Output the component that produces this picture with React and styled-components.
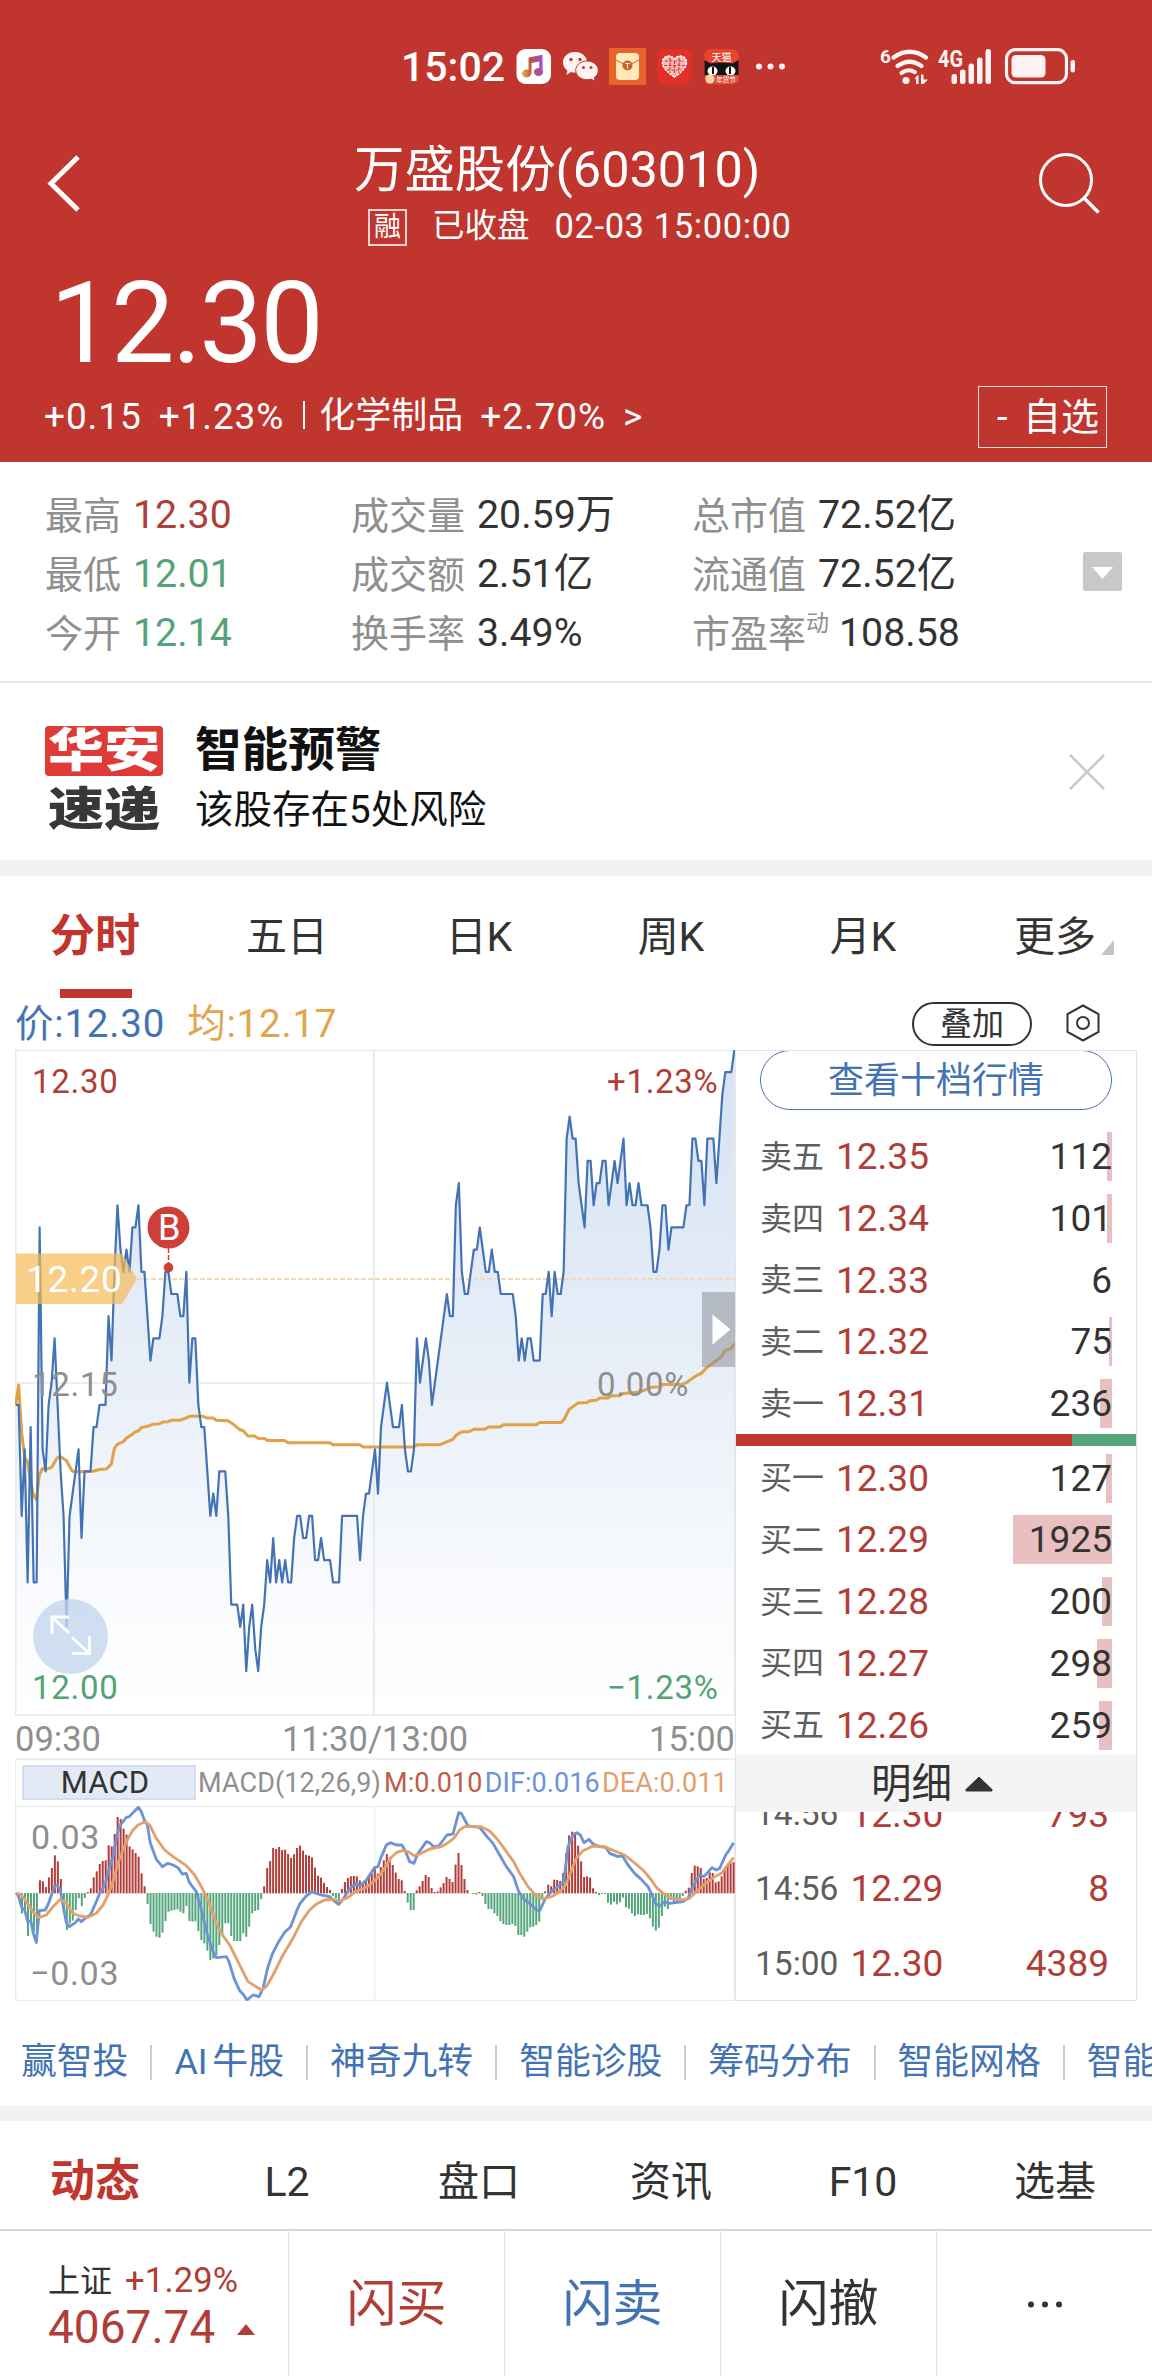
import React, { Component } from "react"
import styled, { createGlobalStyle, css } from "styled-components"

const RED = "#c0362f"
const UP = "#b03d36"
const DOWN = "#54a376"
const BLUE = "#4473b4"
const GRAY = "#8f8f8f"
const DARK = "#333"

// one entry per minute, in 0.01 steps below 12.30
const PRICE = [
	16, 16, 21, 18, 24, 17, 24, 24, 8, 18, 19, 16, 15, 13, 16, 19, 21, 26, 21, 20, 19, 18, 22, 19, 19, 19, 17, 17, 16, 16,
	16, 12, 14, 10, 7, 9, 10, 9, 10, 8, 8, 7, 10, 10, 12, 14, 13, 13, 13, 12, 10, 10, 11, 11, 11, 12, 12, 10, 15, 13,
	13, 16, 17, 17, 19, 21, 20, 21, 19, 19, 19, 21, 25, 25, 25, 26, 25, 28, 26, 25, 27, 28, 26, 25, 23, 24, 22, 24, 23, 24,
	23, 24, 24, 22, 21, 21, 22, 22, 21, 21, 23, 23, 22, 23, 23, 23, 24, 24, 24, 21, 21, 21, 21, 21, 21, 23, 21, 20, 20, 19,
	18, 20, 17, 16, 15, 16, 17, 17, 17, 16, 18, 19, 19, 18, 13, 15, 14, 13, 14, 16, 15, 14, 13, 12, 11, 12, 12, 7, 6, 10,
	11, 11, 10, 9, 9, 8, 9, 10, 10, 9, 10, 10, 11, 11, 11, 11, 11, 12, 14, 13, 14, 13, 13, 14, 14, 14, 11, 11, 10, 12,
	10, 11, 11, 10, 4, 3, 4, 4, 6, 7, 8, 5, 5, 7, 6, 6, 5, 5, 7, 6, 5, 6, 5, 4, 7, 6, 7, 7, 6, 7,
	7, 7, 8, 10, 10, 9, 7, 7, 9, 8, 8, 8, 8, 8, 7, 7, 4, 4, 5, 5, 7, 4, 4, 4, 6, 4, 2, 1, 1, 1, 0,
]

const AVERAGE =
	"48,817 57,773 66,880 75,935 84,945 93,990 101,1018 110,1030 119,975 128,960 137,962 155,958 173,936 182,933 200,942 218,966 240,967 280,966 299,962 320,961 335,950 344,915 353,906 371,900 380,892 398,883 407,878 416,876 425,868 445,865 460,861 478,860 490,856 505,855 514,852 540,852 555,848 570,843 610,843 622,847 640,847 650,852 685,853 703,862 720,873 730,875 745,887 765,887 775,892 795,893 803,897 855,897 865,902 990,902 1000,907 1080,907 1090,912 1240,912 1252,907 1320,907 1335,902 1359,895 1370,885 1385,878 1410,877 1422,872 1455,872 1467,867 1500,867 1512,862 1610,862 1620,857 1685,857 1695,848 1708,828 1735,813 1762,812 1770,808 1790,807 1800,802 1825,802 1835,797 1860,797 1870,792 1910,790 1930,786 1955,778 1980,777 1990,772 2045,772 2060,768 2080,757 2095,750 2105,747 2120,735 2165,710 2177,695 2195,692 2204,680"

const BARS = [
	0, -20, -60, -50, -128, -80, -115, -128, 38, 35, 18, 47, 75, 113, 95, 42, -60, -110, -90, -82, -50, -15, -38, -14, 3, 14, 47, 65, 87, 96,
	98, 143, 140, 177, 228, 222, 193, 175, 140, 131, 120, 109, 59, 20, -32, -92, -115, -130, -133, -118, -83, -55, -52, -50, -48, -55, -60, -38, -83, -85,
	-84, -113, -140, -150, -172, -200, -195, -185, -155, -125, -90, -90, -128, -143, -143, -143, -120, -130, -100, -60, -53, -50, -17, 20, 75, 96, 135, 132, 138, 129,
	130, 117, 105, 116, 135, 142, 127, 114, 112, 107, 76, 52, 46, 30, 18, 9, -8, -15, -25, 12, 33, 45, 50, 51, 50, 38, 30, 36, 48, 58,
	75, 58, 78, 98, 117, 107, 84, 61, 42, 38, 6, -28, -50, -50, 8, 20, 36, 54, 48, 15, 3, 5, 17, 30, 48, 42, 33, 85, 120, 84,
	42, 9, 0, -2, -4, 3, -8, -32, -47, -47, -60, -68, -84, -92, -95, -95, -92, -98, -125, -125, -130, -115, -102, -100, -95, -85, -20, 5, 25, 20,
	40, 39, 36, 60, 120, 173, 184, 182, 142, 95, 48, 50, 46, 14, 3, -5, -2, -2, -28, -34, -26, -33, -27, -13, -42, -46, -60, -68, -63, -65,
	-65, -62, -75, -100, -112, -103, -68, -40, -47, -20, -30, -25, -20, -8, 7, 16, 60, 82, 80, 75, 42, 45, 62, 60, 32, 35, 50, 72, 82, 90, 93,
]

const DIF =
	"50,578 57,590 66,622 75,630 84,665 93,662 101,700 110,728 119,632 137,630 146,612 164,560 173,556 182,570 190,615 200,668 209,680 227,668 236,657 245,665 263,650 272,645 290,605 300,580 317,550 326,515 340,470 353,400 362,375 380,352 389,350 400,338 416,322 425,335 434,360 443,375 452,430 470,478 488,500 505,490 520,495 535,503 548,522 560,520 568,545 577,558 590,575 604,625 622,700 640,755 650,773 680,770 688,785 703,835 720,872 730,882 742,900 760,885 778,890 790,865 805,800 819,760 837,725 855,697 873,680 890,635 900,612 918,590 936,575 950,580 965,585 990,590 1000,600 1017,613 1030,598 1050,565 1070,550 1080,558 1100,540 1125,503 1135,500 1143,475 1160,435 1172,428 1190,435 1207,435 1218,455 1230,485 1243,490 1255,460 1280,425 1290,428 1302,440 1317,438 1342,405 1360,402 1377,338 1385,340 1405,378 1440,382 1462,410 1480,430 1500,465 1520,500 1542,530 1557,575 1575,600 1590,610 1610,630 1620,632 1635,600 1650,580 1665,565 1692,548 1705,440 1720,405 1732,398 1742,405 1753,428 1768,418 1780,432 1800,440 1818,442 1830,460 1855,470 1868,467 1885,495 1905,520 1925,538 1945,560 1955,580 1968,612 1980,618 1995,605 2010,610 2050,605 2065,595 2075,570 2090,540 2100,525 2113,530 2137,503 2150,510 2160,505 2178,465 2190,448 2202,428"

const DEA =
	"50,578 65,585 80,605 100,635 117,653 140,645 160,620 182,598 200,610 220,640 240,648 265,652 290,640 310,615 325,585 340,545 355,490 370,450 385,415 400,390 415,375 435,366 450,375 470,415 495,450 520,470 560,497 585,525 605,560 625,600 650,670 665,700 690,735 715,785 745,845 785,870 800,860 820,825 850,765 880,715 905,665 930,630 950,612 975,600 1000,598 1020,603 1045,592 1070,573 1090,567 1110,555 1135,532 1155,505 1175,472 1190,458 1207,452 1225,455 1243,467 1260,462 1290,447 1325,440 1345,428 1362,415 1380,390 1395,380 1445,380 1470,393 1495,420 1520,455 1542,485 1560,520 1585,560 1610,588 1630,597 1655,590 1680,575 1698,555 1710,525 1730,475 1750,452 1780,438 1815,440 1845,453 1875,465 1900,485 1930,510 1955,540 1970,562 1990,580 2015,593 2045,600 2070,595 2095,570 2125,545 2145,530 2165,520 2180,500 2202,473"

const STATS = [
	[
		["最高", "12.30", UP],
		["最低", "12.01", DOWN],
		["今开", "12.14", DOWN],
	],
	[
		["成交量", "20.59万"],
		["成交额", "2.51亿"],
		["换手率", "3.49%"],
	],
	[
		["总市值", "72.52亿"],
		["流通值", "72.52亿"],
		["市盈率", "108.58", DARK, "动"],
	],
]

const SELLS = [
	["卖五", "12.35", 112, 5],
	["卖四", "12.34", 101, 5],
	["卖三", "12.33", 6, 0],
	["卖二", "12.32", 75, 3],
	["卖一", "12.31", 236, 12],
]

const BUYS = [
	["买一", "12.30", 127, 6],
	["买二", "12.29", 1925, 99],
	["买三", "12.28", 200, 10],
	["买四", "12.27", 298, 15],
	["买五", "12.26", 259, 13],
]

const TRADES = [
	["14:56", "12.30", 793],
	["14:56", "12.29", 8],
	["15:00", "12.30", 4389],
]

const GlobalStyle = createGlobalStyle`
	body {
		margin: 0;
		background: #fff;
		font-family: Roboto, "Noto Sans CJK SC", sans-serif;
		color: ${DARK};
	}
	svg {
		display: block;
		flex: none;
	}
`

const Page = styled.div`
	width: 1152px;
	height: 2376px;
	overflow: hidden;
	line-height: 1;
	white-space: nowrap;
`

const Header = styled.header`
	height: 462px;
	background: ${RED};
	color: #fff;
`

const StatusBar = styled.div`
	display: flex;
	align-items: center;
	height: 134px;
	padding-left: 401px;
	box-sizing: border-box;
`

const Clock = styled.span`
	width: 115px;
	padding-top: 1px;
	font-size: 41px;
	font-weight: 500;
`

const Nav = styled.div`
	display: flex;
	height: 114px;
	padding-left: 47px;

	.back {
		margin-top: 20px;
	}
	.search {
		margin: 18px 0 0 auto;
		padding-right: 51px;
	}
`

const Heading = styled.div`
	width: 500px;
	padding-left: 273px;

	h1 {
		margin: 0;
		font-size: 50.4px;
		font-weight: 400;
		line-height: 71px;
	}
	p {
		display: flex;
		align-items: center;
		height: 42px;
		margin: 0;
		padding-left: 14px;
		font-size: 32.5px;
	}
	.time {
		margin-left: 25px;
		font-size: 34.5px;
		letter-spacing: 0.6px;
	}
`

const MarginTag = styled.span`
	width: 39px;
	margin: 3px 25px 0 0;
	border: 2px solid #f3d3d1;
	box-sizing: border-box;
	font-size: 27px;
	line-height: 33px;
	text-align: center;
`

const LastPrice = styled.div`
	height: 139px;
	padding-left: 50px;
	font-size: 113px;
	line-height: 151px;
	letter-spacing: -2.5px;
`

const ChangeRow = styled.div`
	display: flex;
	align-items: center;
	height: 60px;
	padding: 0 45px 0 44px;
	font-size: 36px;

	span {
		margin: 0 17px 2px 0;
	}
	i {
		width: 2px;
		height: 28px;
		margin: 0 14px 4px 2px;
		background: #fff;
	}
`

const Change = styled.span`
	font-size: 37px;
	letter-spacing: 0.9px;
`

const WatchButton = styled.div`
	width: 129px;
	margin-left: auto;
	padding-left: 18px;
	border: 1px solid #f6dddc;
	box-sizing: border-box;
	font-size: 38px;
	line-height: 60px;
	word-spacing: 6px;
`

const Stats = styled.section`
	display: flex;
	height: 221px;
	padding-top: 24px;
	box-sizing: border-box;
	border-bottom: 2px solid #e6e6e6;

	svg {
		margin: 66px 30px 0 auto;
	}
`

const StatColumn = styled.div`
	width: ${({ $width }) => $width}px;
	padding-left: ${({ $left }) => $left}px;
	box-sizing: border-box;
`

const Stat = styled.div`
	display: flex;
	align-items: center;
	height: 59px;
	font-size: 38px;
	color: ${GRAY};

	sup {
		align-self: flex-start;
		margin-right: -2px;
		font-size: 23px;
		line-height: 40px;
	}
	b {
		margin-left: 12px;
		font-size: 39.3px;
		font-weight: 400;
		color: ${({ $color }) => $color || DARK};
	}
`

const Alert = styled.section`
	display: flex;
	align-items: center;
	height: 177px;
	padding: 0 47px 0 45px;
	border-bottom: 16px solid #f1f1f1;

	svg {
		margin-left: auto;
	}
`

const AlertLogo = styled.div`
	width: 118px;
	height: 112px;
	margin: 23px 32px 3px 0;
	font-weight: 900;
	text-align: center;

	div {
		height: 50px;
		border-radius: 4px;
		line-height: 48px;
		background: #de3a37;
		color: #fff;
	}
	div + div {
		height: 62px;
		line-height: 66px;
		background: none;
		color: #383838;
	}
	span {
		display: inline-block;
		font-size: 46px;
		transform: scaleX(1.22);
	}
`

const AlertText = styled.div`
	padding-top: 17px;
	font-size: 38.5px;
	line-height: 59px;
	color: #111;

	strong {
		display: block;
		font-size: 46.6px;
		font-weight: 700;
	}
`

const Tabs = styled.nav`
	display: grid;
	grid-template-columns: repeat(6, 192px);
	height: ${({ $height }) => $height}px;
	line-height: ${({ $line }) => $line}px;
	text-align: center;
	font-size: 41px;
`

const Tab = styled.span`
	position: relative;
	text-indent: -2px;
	${({ $active }) =>
		$active &&
		css`
			font-size: 45px;
			font-weight: 700;
			color: ${RED};
		`}
	${({ $underline }) =>
		$underline &&
		css`
			&:after {
				content: "";
				position: absolute;
				left: 60px;
				bottom: 0;
				width: 72px;
				height: 9px;
				background: ${RED};
			}
		`}
	svg {
		position: absolute;
		right: 38px;
		top: 62px;
	}
`

const QuoteLine = styled.div`
	display: flex;
	align-items: center;
	height: 54px;
	padding: 0 52px 0 15px;
	font-size: 38.5px;
	letter-spacing: 0.8px;
	color: ${BLUE};

	span:not(:nth-child(3)) {
		margin-top: 2px;
	}
	.avg {
		margin-left: 22px;
		color: #e2a44c;
	}
`

const Overlay = styled.span`
	width: 120px;
	margin: 2px 34px 0 auto;
	border: 2px solid ${DARK};
	border-radius: 22px;
	box-sizing: border-box;
	font-size: 32px;
	line-height: 40px;
	letter-spacing: 0;
	text-align: center;
	color: ${DARK};
`

const Market = styled.section`
	display: flex;
	height: 951px;
	padding-left: 15px;
`

const ChartColumn = styled.div`
	width: 720px;
`

const Plot = styled.div`
	position: relative;
	height: ${({ $height }) => $height}px;
	color: ${GRAY};
`

const PlotLabel = styled.span`
	position: absolute;
	top: ${({ $top }) => $top}px;
	left: ${({ $left }) => $left}px;
	line-height: 40px;
	color: ${({ $color }) => $color || GRAY};
	font-size: ${({ $size }) => $size || 33}px;
	letter-spacing: 0.7px;
`

const TimeAxis = styled.div`
	display: flex;
	justify-content: space-between;
	height: 42px;
	line-height: 47px;
	font-size: 34.5px;
	color: ${GRAY};
`

const MacdHead = styled.div`
	display: flex;
	align-items: center;
	height: 48px;
	padding-left: 6px;
	border: solid #f0f0f0;
	border-width: 2px 0 0 1px;
	box-sizing: border-box;
	font-size: 27px;
	letter-spacing: 0.1px;
	color: ${GRAY};
`

const MacdButton = styled.span`
	width: 174px;
	margin: 0 2px 2px 0;
	padding-right: 8px;
	border: 2px solid #d3def2;
	box-sizing: border-box;
	background: #e3e9f5;
	font-size: 31px;
	line-height: 31px;
	text-align: center;
	color: ${DARK};
`

const MacdValue = styled.span`
	margin-left: ${({ $gap }) => $gap}px;
	color: ${({ $color }) => $color};
`

const Book = styled.div`
	width: 402px;
	height: 951px;
	overflow: hidden;
	border: 1px solid #e4e4e4;
	box-sizing: border-box;
`

const DepthButton = styled.div`
	width: 352px;
	height: 60px;
	margin: -1px 0 16px 24px;
	border: 1.5px solid ${BLUE};
	border-radius: 30px;
	box-sizing: border-box;
	font-size: 36px;
	line-height: 60px;
	text-align: center;
	color: ${BLUE};
`

const Level = styled.div`
	display: flex;
	align-items: center;
	height: 61.7px;
	padding: 0 24px;
	font-size: 32px;
	color: #5e5e5e;

	b {
		margin-left: 12px;
		font-size: 37px;
		font-weight: 400;
		color: ${UP};
	}
`

const Volume = styled.span`
	display: flex;
	justify-content: flex-end;
	align-items: center;
	height: 49px;
	margin-left: auto;
	min-width: 100px;
	box-sizing: border-box;
	font-size: 37px;
	color: ${DARK};
	background: linear-gradient(#e8c0c1, #e8c0c1) no-repeat right / ${({ $bar }) => $bar}px 100%;
`

const Ratio = styled.div`
	height: 12px;
	margin-bottom: 1px;
	background: linear-gradient(90deg, ${RED} 84%, #54a678 84%);
`

const DetailBar = styled.div`
	display: flex;
	align-items: center;
	height: 57px;
	margin-top: -1px;
	padding: 2px 0 0 135px;
	box-sizing: border-box;
	font-size: 40.5px;
	background: #f4f4f4;

	svg {
		margin-left: 13px;
	}
`

const TradeList = styled.div`
	display: flex;
	flex-direction: column;
	justify-content: flex-end;
	height: 189px;
	overflow: hidden;
`

const Trade = styled.div`
	display: flex;
	flex: none;
	align-items: center;
	height: 74.7px;
	padding: 0 27px 0 19px;
	font-size: 33.5px;
	color: #5e5e5e;

	b {
		margin-left: 12px;
		font-size: 37px;
		font-weight: 400;
		color: ${UP};
	}
	b:last-child {
		margin-left: auto;
	}
`

const Links = styled.div`
	display: flex;
	align-items: center;
	height: 105px;
	padding: 18px 0 0 21px;
	box-sizing: border-box;
	overflow: hidden;
	font-size: 35.8px;
	word-spacing: -4px;
	color: ${BLUE};

	span + span {
		margin-left: 22px;
		padding-left: 22px;
		border-left: 2px solid #ccc;
	}
`

const Divider = styled.div`
	height: 15px;
	background: #f1f1f1;
`

const Footer = styled.footer`
	display: grid;
	grid-template-columns: 288px repeat(4, 216px);
	height: 147px;
	border-top: 2px solid #d6d6d6;
	box-sizing: border-box;
`

const Action = styled.div`
	display: flex;
	align-items: center;
	justify-content: center;
	padding-top: 1px;
	border-left: 1px solid #e4e4e4;
	font-size: 50px;
	color: ${({ $color }) => $color || DARK};
`

const Index = styled.div`
	padding: 24px 0 0 48px;
	font-size: 32px;
	line-height: 50px;

	span {
		margin-left: 13px;
		font-size: 34.5px;
		letter-spacing: 0.2px;
		color: ${UP};
	}
	div {
		display: flex;
		align-items: center;
		font-size: 46px;
		line-height: 43px;
		color: ${UP};
	}
	svg {
		margin: 3px 0 0 22px;
	}
`

const StatusIcons = () => (
	<svg width="636" height="50" viewBox="516 42 636 50">
		<defs>
			<linearGradient id="note" gradientUnits="userSpaceOnUse" x1="522" y1="72" x2="543" y2="70">
				<stop offset="0" stopColor="#f0b050" />
				<stop offset="0.45" stopColor="#b5583c" />
				<stop offset="1" stopColor="#a848e0" />
			</linearGradient>
		</defs>
		<rect x="516.500" y="49" width="34.500" height="35" rx="9" fill="#fff" />
		<g fill="url(#note)">
			<path d="M528.500 57.500l14-2.800v17h-3.200V61.500l-7.800 1.600v10.500h-3z" />
			<ellipse cx="526.500" cy="73.500" rx="4.600" ry="4" />
			<ellipse cx="538.500" cy="72" rx="4.600" ry="4" />
		</g>
		<g fill="#fdf3f3">
			<path d="M575 52c7 0 12 4.500 12 10.200S582 72.500 575 72.500c-1.500 0-3-.2-4.300-.6L566.500 75l.8-4.500c-2.700-2-4.300-4.800-4.300-8.200C563 56.500 568 52 575 52z" />
			<path
				d="M587 61c6.300 0 11.300 4 11.300 9.300 0 3-1.600 5.600-4 7.300l.6 3.700-3.800-2.200c-1.300.4-2.600.6-4.100.6-6.300 0-11.300-4.200-11.300-9.400S580.700 61 587 61z"
				stroke={RED}
				strokeWidth="1"
			/>
		</g>
		<g fill={RED}>
			<circle cx="571" cy="59.500" r="1.700" />
			<circle cx="580" cy="59.500" r="1.700" />
			<circle cx="583.500" cy="67.500" r="1.500" />
			<circle cx="591" cy="67.500" r="1.500" />
		</g>
		<rect x="609" y="48" width="37" height="37" fill="#e9632d" />
		<rect x="616" y="53" width="23" height="27" rx="4" fill="#fdeab8" />
		<path d="M616 60l11.500 6L639 60" fill="none" stroke="#c9622c" strokeWidth="1" />
		<circle cx="627.500" cy="65.500" r="5" fill="#c9622c" />
		<path d="M625 63.500h5M627.500 63.500v5" stroke="#fdeab8" strokeWidth="1" />
		<rect x="657.500" y="49" width="34" height="35" rx="6" fill="#e22f27" />
		<path
			d="M674.500 77c-6-4-12-9-12-14.500 0-7 8.500-8.500 12-3.500 3.500-5 12-3.500 12 3.500 0 5.500-6 10.500-12 14.500z"
			fill="#f7bdb9"
			stroke="#fff"
			strokeWidth="1.500"
			strokeDasharray="2.500 1"
		/>
		<path d="M665 61h19M664 65.500h21M667 70h15M670 58v15M674.500 61v14M679 58v15" stroke="#e22f27" strokeWidth="1.200" strokeDasharray="3 1.500" />
		<rect x="704.500" y="49" width="34" height="35" rx="6" fill="#e8452f" />
		<path d="M704.500 60l6 3.500q11-2 22 0l6-3.500v16h-34z" fill="#141414" />
		<ellipse cx="712.500" cy="71" rx="5" ry="4.500" fill="#fff" />
		<ellipse cx="730.500" cy="71" rx="5" ry="4.500" fill="#fff" />
		<path d="M713 67v7M730 67v7" stroke="#141414" strokeWidth="2" />
		<path d="M704.500 75h34v4a5 5 0 0 1-5 5h-24a5 5 0 0 1-5-5z" fill="#e05038" />
		<circle cx="710" cy="79" r="4.500" fill="#f6d8a0" />
		<text x="721.500" y="60.500" fontSize="10" textAnchor="middle" fill="#fff">
			天猫
		</text>
		<text x="726" y="82" fontSize="6.500" textAnchor="middle" fill="#fff">
			年货节
		</text>
		<g fill="#fdf3f3">
			<circle cx="759" cy="66.500" r="3" />
			<circle cx="770.500" cy="66.500" r="3" />
			<circle cx="782" cy="66.500" r="3" />
			<text x="880" y="62.500" fontSize="19" fontWeight="700">
				6
			</text>
			<text x="938" y="66.500" fontSize="23" fontWeight="700" textLength="25" lengthAdjust="spacingAndGlyphs">
				4G
			</text>
			<circle cx="906" cy="80.500" r="3.500" />
			<path d="M914.500 78.500l4-4v9.500h-2.500v-5zM921 74.500h2.500v5h4.500l-4.500 4.500h-2.500z" />
			<rect x="951.500" y="74" width="5.500" height="10" rx="2.500" />
			<rect x="960" y="69.500" width="5.500" height="14.500" rx="2.500" />
			<rect x="968.500" y="63.500" width="5.500" height="20.500" rx="2.500" />
			<rect x="977" y="57.500" width="5.500" height="26.500" rx="2.500" />
			<rect x="985.500" y="49" width="5.500" height="35" rx="2.500" />
			<rect x="1011.500" y="55" width="34" height="22.500" rx="4.500" />
			<rect x="1070.500" y="60" width="4.500" height="12.500" rx="2.200" />
		</g>
		<g fill="none" stroke="#fdf3f3" strokeLinecap="round">
			<path d="M893.500 57.500q16-11.500 32.500 0" strokeWidth="4.400" />
			<path d="M897.500 66q12-8.500 24 0" strokeWidth="4.200" />
			<path d="M901.500 73q7-5 13.500-.8" strokeWidth="4" />
			<rect x="1006.500" y="49.700" width="60" height="33" rx="9" strokeWidth="3.200" />
		</g>
	</svg>
)

const AlertBadge = () => (
	<AlertLogo>
		<div>
			<span>华安</span>
		</div>
		<div>
			<span>速递</span>
		</div>
	</AlertLogo>
)

const Depth = ({ rows }) =>
	rows.map(([name, price, volume, bar]) => (
		<Level key={name}>
			{name}
			<b>{price}</b>
			<Volume $bar={bar}>{volume}</Volume>
		</Level>
	))

class PriceChart extends Component {
	render() {
		const step = 2156 / (PRICE.length - 1)
		const line = PRICE.map((k, i) => `${(48 + i * step).toFixed(1)},${(23 + k * 49.66).toFixed(1)}`).join(" ")
		return (
			<Plot $height={666}>
				<svg width="720" height="666">
					<defs>
						<linearGradient id="area" gradientUnits="userSpaceOnUse" x1="0" y1="23" x2="0" y2="1514">
							<stop offset="0" stopColor="#d4e2f4" />
							<stop offset="0.5" stopColor="#e9eff8" />
							<stop offset="0.8" stopColor="#f8fafd" />
							<stop offset="1" stopColor="#ffffff" />
						</linearGradient>
					</defs>
					<svg width="720" height="666" viewBox="46 23 2160 1491" preserveAspectRatio="none">
						<polygon points={`48,1514 ${line} 2204,1514`} fill="url(#area)" />
					</svg>
					<path d="M0 .5H720M0 665H720M.8 0V666M719.500 0V666M0 333H718" stroke="#e9eaec" strokeWidth="1.500" fill="none" />
					<path d="M359 0V666" stroke="#e9eaec" strokeWidth="2" />
					<path d="M122 229H719" stroke="#f1d9c2" strokeWidth="1.800" strokeDasharray="5 2" />
					<svg width="720" height="666" viewBox="46 23 2160 1491" preserveAspectRatio="none">
						<g fill="none" strokeLinejoin="round">
							<polyline points={AVERAGE} stroke="#dfa247" strokeWidth="3" vectorEffect="non-scaling-stroke" />
							<polyline points={line} stroke={BLUE} strokeWidth="2.2" vectorEffect="non-scaling-stroke" />
						</g>
					</svg>
					<path d="M1 203.500H107L122 229L107 254H1z" fill="#f3bb57" fillOpacity="0.7" />
					<path d="M153.500 198V214" stroke="#cf3f3a" strokeWidth="1.500" strokeDasharray="5 2" />
					<circle cx="153.500" cy="177.500" r="21" fill="#cf3f3a" />
					<circle cx="153.500" cy="217.500" r="4.800" fill="#cf3f3a" />
					<circle cx="55.500" cy="586.500" r="37.500" fill="#c4d6ee" fillOpacity="0.8" />
					<path
						d="M54 567H37V584M37.500 567.500L54 583M57 603.500H74.500V586M74 603L57 587.500"
						fill="none"
						stroke="#fff"
						strokeWidth="3"
					/>
					<rect x="687" y="242" width="33" height="75" fill="#8d9299" fillOpacity="0.55" />
					<path d="M697.500 264.500V294.500L715.500 279.500z" fill="#fff" />
				</svg>
				<PlotLabel $left={17} $top={12} $color={UP}>12.30</PlotLabel>
				<PlotLabel $left={592} $top={12} $color={UP}>+1.23%</PlotLabel>
				<PlotLabel $left={17} $top={315}>12.15</PlotLabel>
				<PlotLabel $left={582} $top={315}>0.00%</PlotLabel>
				<PlotLabel $left={17} $top={618} $color={DOWN}>12.00</PlotLabel>
				<PlotLabel $left={592} $top={618} $color={DOWN}>−1.23%</PlotLabel>
				<PlotLabel $left={11} $top={210} $color="#fff" $size={37}>12.20</PlotLabel>
				<PlotLabel $left={143} $top={158} $color="#fff" $size={36}>B</PlotLabel>
			</Plot>
		)
	}
}

const MacdChart = () => (
	<Plot $height={195}>
		<svg width="720" height="195" viewBox="46 318 2160 585" preserveAspectRatio="none">
			<path d="M46 320H2206M46 901H2206M48 318V903M2204 318V903" stroke="#ececec" strokeWidth="4" />
			<path d="M1125 318V903" stroke="#f0f0f0" strokeWidth="5" />
			{BARS.map((h, i) => (
				<rect
					key={i}
					x={46 + i * 8.97}
					y={h > 0 ? 579 - h : 579}
					width="6"
					height={Math.abs(h) + 1}
					fill={h > 0 ? "#b23c38" : "#52a67a"}
				/>
			))}
			<g fill="none" strokeWidth="8.5" strokeLinejoin="round">
				<polyline points={DIF} stroke="#6d92d6" />
				<polyline points={DEA} stroke="#e2a06c" />
			</g>
		</svg>
		<PlotLabel $left={16} $top={11} $size={34}>0.03</PlotLabel>
		<PlotLabel $left={15} $top={147} $size={34}>−0.03</PlotLabel>
	</Plot>
)

class App extends Component {
	render() {
		return (
			<Page>
				<GlobalStyle />
				<Header>
					<StatusBar>
						<Clock>15:02</Clock>
						<StatusIcons />
					</StatusBar>
					<Nav>
						<svg className="back" width="34" height="60" viewBox="0 0 34 60">
							<path d="M31 3L4 29.500L31 56" fill="none" stroke="#fff" strokeWidth="5" />
						</svg>
						<Heading>
							<h1>万盛股份(603010)</h1>
							<p>
								<MarginTag>融</MarginTag>
								已收盘
								<span className="time">02-03 15:00:00</span>
							</p>
						</Heading>
						<svg className="search" width="64" height="64" viewBox="0 0 64 64">
							<circle cx="29" cy="28" r="25.500" fill="none" stroke="#fff" strokeWidth="3" />
							<path d="M47 46L61.500 60.500" stroke="#fff" strokeWidth="3.500" />
						</svg>
					</Nav>
					<LastPrice>12.30</LastPrice>
					<ChangeRow>
						<Change>+0.15</Change>
						<Change>+1.23%</Change>
						<i />
						<span>化学制品</span>
						<Change>+2.70%</Change>
						<Change>&gt;</Change>
						<WatchButton>- 自选</WatchButton>
					</ChangeRow>
				</Header>
				<Stats>
					{STATS.map((column, c) => (
						<StatColumn key={c} $left={c === 0 ? 45 : 0} $width={[351, 341, 300][c]}>
							{column.map(([name, value, color, mark]) => (
								<Stat key={name} $color={color}>
									{name}
									{mark && <sup>{mark}</sup>}
									<b>{value}</b>
								</Stat>
							))}
						</StatColumn>
					))}
					<svg width="39" height="39" viewBox="0 0 39 39">
						<rect width="39" height="39" rx="2" fill="#c8c8c8" />
						<path d="M9 15H30L19.500 27z" fill="#fff" />
					</svg>
				</Stats>
				<Alert>
					<AlertBadge />
					<AlertText>
						<strong>智能预警</strong>
						该股存在5处风险
					</AlertText>
					<svg width="36" height="36" viewBox="0 0 36 36">
						<path d="M1 1L35 35M35 1L1 35" stroke="#c9c9c9" strokeWidth="2.500" />
					</svg>
				</Alert>
				<Tabs $height={120} $line={122}>
					<Tab $active $underline>
						分时
					</Tab>
					<Tab>五日</Tab>
					<Tab>日K</Tab>
					<Tab>周K</Tab>
					<Tab>月K</Tab>
					<Tab>
						更多
						<svg width="13" height="17" viewBox="0 0 13 17">
							<path d="M13 2V17H0z" fill="#c4c4c4" />
						</svg>
					</Tab>
				</Tabs>
				<QuoteLine>
					<span>价:12.30</span>
					<span className="avg">均:12.17</span>
					<Overlay>叠加</Overlay>
					<svg width="34" height="38" viewBox="0 0 34 38">
						<path d="M17 1.500L32.500 10V28L17 36.500L1.500 28V10z" fill="none" stroke={DARK} strokeWidth="2" />
						<circle cx="17" cy="19" r="6" fill="none" stroke={DARK} strokeWidth="2" />
					</svg>
				</QuoteLine>
				<Market>
					<ChartColumn>
						<PriceChart />
						<TimeAxis>
							<span>09:30</span>
							<span>11:30/13:00</span>
							<span>15:00</span>
						</TimeAxis>
						<MacdHead>
							<MacdButton>MACD</MacdButton>
							<span>MACD(12,26,9)</span>
							<MacdValue $gap={3} $color="#be5c49">M:0.010</MacdValue>
							<MacdValue $gap={2} $color="#6d92d6">DIF:0.016</MacdValue>
							<MacdValue $gap={2} $color="#e0a070">DEA:0.011</MacdValue>
						</MacdHead>
						<MacdChart />
					</ChartColumn>
					<Book>
						<DepthButton>查看十档行情</DepthButton>
						<Depth rows={SELLS} />
						<Ratio />
						<Depth rows={BUYS} />
						<DetailBar>
							明细
							<svg width="28" height="16" viewBox="0 0 28 16">
								<path d="M14 1L27 13.500V15H1V13.500z" fill={DARK} stroke={DARK} strokeLinejoin="round" />
							</svg>
						</DetailBar>
						<TradeList>
							{TRADES.map(([time, price, volume]) => (
								<Trade key={volume}>
									{time}
									<b>{price}</b>
									<b>{volume}</b>
								</Trade>
							))}
						</TradeList>
					</Book>
				</Market>
				<Links>
					<span>赢智投</span>
					<span>AI 牛股</span>
					<span>神奇九转</span>
					<span>智能诊股</span>
					<span>筹码分布</span>
					<span>智能网格</span>
					<span>智能盯盘</span>
				</Links>
				<Divider />
				<Tabs $height={108} $line={122}>
					<Tab $active>动态</Tab>
					<Tab>L2</Tab>
					<Tab>盘口</Tab>
					<Tab>资讯</Tab>
					<Tab>F10</Tab>
					<Tab>选基</Tab>
				</Tabs>
				<Footer>
					<Index>
						上证<span>+1.29%</span>
						<div>
							4067.74
							<svg width="18" height="11" viewBox="0 0 18 11">
								<path d="M9 0L18 11H0z" fill={UP} />
							</svg>
						</div>
					</Index>
					<Action $color={UP}>闪买</Action>
					<Action $color={BLUE}>闪卖</Action>
					<Action>闪撤</Action>
					<Action>
						<svg width="36" height="7" viewBox="0 0 36 7">
							<circle cx="4" cy="3.500" r="3" fill={DARK} />
							<circle cx="18" cy="3.500" r="3" fill={DARK} />
							<circle cx="32" cy="3.500" r="3" fill={DARK} />
						</svg>
					</Action>
				</Footer>
			</Page>
		)
	}
}

export default App
